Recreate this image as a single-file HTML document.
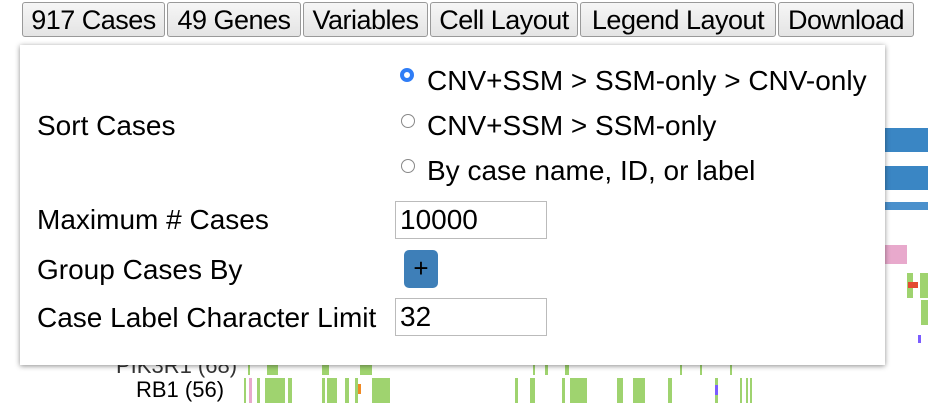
<!DOCTYPE html>
<html><head><style>
body{margin:0;width:928px;height:408px;background:#fff;position:relative;overflow:hidden;font-family:"Liberation Sans",Arial,sans-serif;color:#000}
.b{position:absolute;top:2px;height:35px;border:1px solid #999;border-radius:3px;background:linear-gradient(#f6f6f6,#e4e4e4);font-size:27px;line-height:34px;text-align:center;box-sizing:border-box;white-space:nowrap;overflow:hidden;letter-spacing:-0.5px}
.r{position:absolute}
.panel{position:absolute;left:20px;top:45px;width:865px;height:320px;background:#fff;box-shadow:0 1px 5px rgba(0,0,0,.45);}
.t{position:absolute;font-size:28px;white-space:nowrap;line-height:28px}
.in{position:absolute;border:1px solid #bbb;box-sizing:border-box;font-size:28px;line-height:36px;padding-left:4px}
.rad{position:absolute;width:14px;height:14px;border:1px solid #888;border-radius:50%;box-sizing:border-box;background:#fff}
.g{position:absolute;background:#9fd36f}
</style></head><body>
<div class="b" style="left:22px;width:143px">917 Cases</div>
<div class="b" style="left:167px;width:134px">49 Genes</div>
<div class="b" style="left:303px;width:125px">Variables</div>
<div class="b" style="left:430px;width:148px">Cell Layout</div>
<div class="b" style="left:580px;width:196px">Legend Layout</div>
<div class="b" style="left:778px;width:136px">Download</div>

<div class="r" style="left:885px;top:128px;width:43px;height:24px;background:#3a86c4"></div>
<div class="r" style="left:885px;top:166px;width:43px;height:24px;background:#3a86c4"></div>
<div class="r" style="left:885px;top:202px;width:43px;height:8px;background:#4a90cc"></div>
<div class="r" style="left:885px;top:245px;width:22px;height:19px;background:#e8a9cc"></div>
<div class="g" style="left:907px;top:273px;width:6px;height:25px"></div>
<div class="r" style="left:908px;top:282px;width:10px;height:6px;background:#e34a33"></div>
<div class="g" style="left:920px;top:273px;width:8px;height:25px"></div>
<div class="g" style="left:921px;top:300px;width:7px;height:25px"></div>
<div class="r" style="left:918px;top:335px;width:3px;height:8px;background:#7b5cff"></div>

<div class="t" style="left:116px;top:352px;font-size:22px;color:#333">PIK3R1 (68)</div>
<div class="t" style="left:136px;top:376px;font-size:22px">RB1 (56)</div>
<div class="g" style="left:244px;top:378px;width:2px;height:25px"></div>
<div class="g" style="left:249px;top:378px;width:3px;height:25px;background:#e8a9cc"></div>
<div class="g" style="left:257px;top:378px;width:3px;height:25px"></div>
<div class="g" style="left:265px;top:378px;width:20px;height:25px"></div>
<div class="g" style="left:288px;top:378px;width:4px;height:25px"></div>
<div class="g" style="left:322px;top:378px;width:3px;height:25px"></div>
<div class="g" style="left:327px;top:378px;width:10px;height:25px"></div>
<div class="g" style="left:345px;top:378px;width:4px;height:25px"></div>
<div class="g" style="left:355px;top:378px;width:3px;height:25px"></div>
<div class="r" style="left:358px;top:384px;width:3px;height:10px;background:#f08a24"></div>
<div class="g" style="left:372px;top:378px;width:18px;height:25px"></div>
<div class="g" style="left:515px;top:378px;width:3px;height:25px"></div>
<div class="g" style="left:530px;top:378px;width:5px;height:25px"></div>
<div class="g" style="left:562px;top:378px;width:3px;height:25px"></div>
<div class="g" style="left:570px;top:378px;width:17px;height:25px"></div>
<div class="g" style="left:617px;top:378px;width:6px;height:25px"></div>
<div class="g" style="left:633px;top:378px;width:12px;height:25px"></div>
<div class="g" style="left:668px;top:378px;width:4px;height:25px"></div>
<div class="g" style="left:715px;top:378px;width:3px;height:25px"></div>
<div class="r" style="left:715px;top:385px;width:3px;height:10px;background:#7b5cff"></div>
<div class="g" style="left:740px;top:378px;width:2px;height:25px"></div>
<div class="g" style="left:746px;top:378px;width:2px;height:25px"></div>
<div class="g" style="left:750px;top:378px;width:2px;height:25px"></div>
<div class="g" style="left:248px;top:365px;width:2px;height:10px"></div>
<div class="g" style="left:267px;top:365px;width:11px;height:10px"></div>
<div class="g" style="left:322px;top:365px;width:7px;height:10px"></div>
<div class="g" style="left:360px;top:365px;width:12px;height:10px"></div>
<div class="g" style="left:533px;top:365px;width:2px;height:10px"></div>
<div class="g" style="left:545px;top:365px;width:3px;height:10px"></div>
<div class="g" style="left:565px;top:365px;width:4px;height:10px"></div>
<div class="g" style="left:680px;top:365px;width:2px;height:10px"></div>
<div class="g" style="left:700px;top:365px;width:2px;height:10px"></div>
<div class="g" style="left:730px;top:365px;width:2px;height:10px"></div>

<div class="panel">
<div class="t" style="left:17px;top:67px">Sort Cases</div>
<div class="rad" style="left:380px;top:23px;border:4px solid #2f7df6"></div>
<div class="t" style="left:407px;top:22px">CNV+SSM &gt; SSM-only &gt; CNV-only</div>
<div class="rad" style="left:381px;top:69px"></div>
<div class="t" style="left:407px;top:67px">CNV+SSM &gt; SSM-only</div>
<div class="rad" style="left:381px;top:114px"></div>
<div class="t" style="left:407px;top:112px">By case name, ID, or label</div>
<div class="t" style="left:17px;top:161px">Maximum # Cases</div>
<div class="in" style="left:375px;top:156px;width:152px;height:38px">10000</div>
<div class="t" style="left:17px;top:211px">Group Cases By</div>
<div class="r" style="left:384px;top:205px;width:34px;height:38px;background:#3e7fb8;border-radius:5px;font-size:26px;line-height:36px;text-align:center">+</div>
<div class="t" style="left:17px;top:259px">Case Label Character Limit</div>
<div class="in" style="left:375px;top:253px;width:152px;height:38px">32</div>
</div>
</body></html>
